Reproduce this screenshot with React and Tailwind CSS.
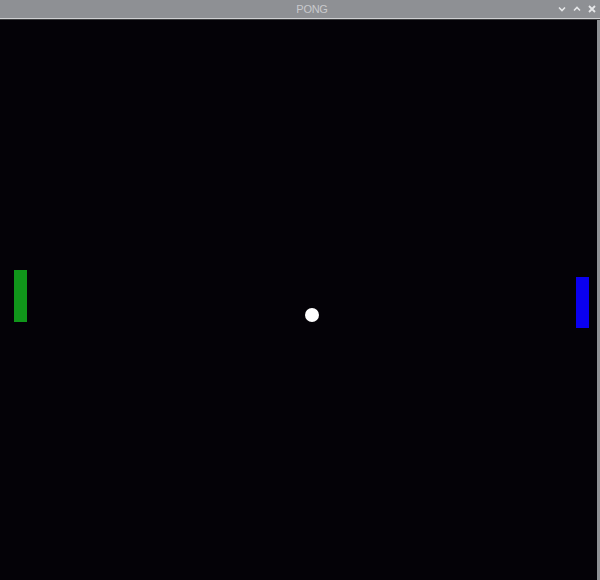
export default function App() {
  return (
    <div className="w-[600px] h-[580px] flex flex-col bg-[#8e9094] overflow-hidden" style={{ fontFamily: '"Liberation Sans", Arial, sans-serif' }}>
      {/* Title bar */}
      <div className="h-[18px] flex items-center relative bg-[#8e9094]">
        <span className="absolute left-[312px] -translate-x-1/2 text-[11px] leading-none text-[#c9cacd] tracking-tight">PONG</span>
        <div className="ml-auto flex items-center gap-[7px] pr-[4px] text-[#e6e7e9]">
          <svg width="8" height="8" viewBox="0 0 8 8" fill="none" stroke="currentColor" strokeWidth="1.6">
            <path d="M1 2.5 L4 5.5 L7 2.5" />
          </svg>
          <svg width="8" height="8" viewBox="0 0 8 8" fill="none" stroke="currentColor" strokeWidth="1.6">
            <path d="M1 5.5 L4 2.5 L7 5.5" />
          </svg>
          <svg width="8" height="8" viewBox="0 0 8 8" fill="none" stroke="currentColor" strokeWidth="1.8">
            <path d="M1 1 L7 7 M7 1 L1 7" />
          </svg>
        </div>
      </div>
      <div className="h-px bg-[#cfd0d2]" />
      <div className="h-px bg-[#3a3b3d]" />

      {/* Game canvas */}
      <div className="flex-1 flex">
        <div className="relative flex-1 bg-[#040207]">
          <div className="absolute left-[14px] top-[250px] w-[13px] h-[52px] bg-[#10961a]" />
          <div className="absolute left-[576px] top-[257px] w-[13px] h-[51px] bg-[#0a00f0]" />
          <div className="absolute left-[305px] top-[288px] w-[14px] h-[14px] rounded-full bg-white" />
        </div>
        <div className="w-[3px] bg-[#8e9094]" />
      </div>
    </div>
  );
}
